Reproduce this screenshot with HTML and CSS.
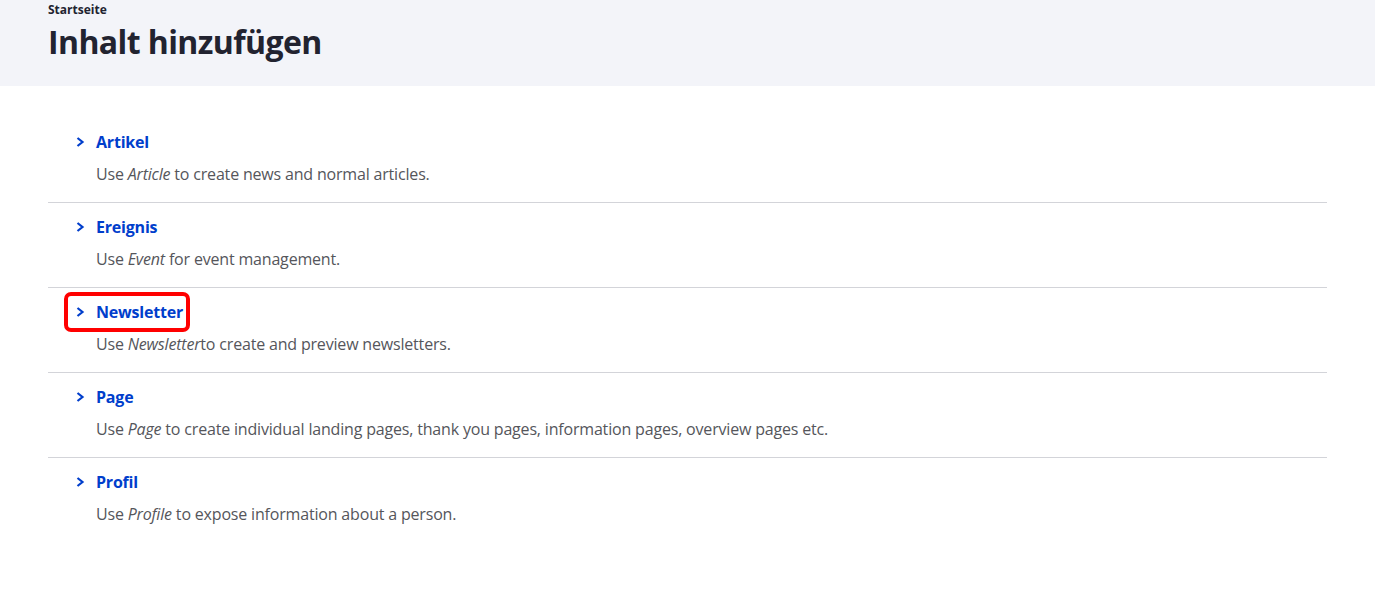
FILE: index.html
```html
<!DOCTYPE html>
<html lang="de">
<head>
<meta charset="utf-8">
<title>Inhalt hinzufügen</title>
<link rel="stylesheet" href="styles.css">
</head>
<body>
<header class="page-header">
  <nav class="breadcrumb"><a href="#">Startseite</a></nav>
  <h1 class="page-title">Inhalt hinzufügen</h1>
</header>
<main class="content">
  <ul class="type-list">
    <li class="type-item">
      <a class="type-link" href="#"><svg class="chev" viewBox="0 0 9 10" width="9" height="10"><path d="M1.5 1 L6.5 5 L1.5 9" fill="none" stroke="currentColor" stroke-width="2.2"/></svg><span>Artikel</span></a>
      <p class="type-desc">Use <em>Article</em> to create news and normal articles.</p>
    </li>
    <li class="type-item">
      <a class="type-link" href="#"><svg class="chev" viewBox="0 0 9 10" width="9" height="10"><path d="M1.5 1 L6.5 5 L1.5 9" fill="none" stroke="currentColor" stroke-width="2.2"/></svg><span>Ereignis</span></a>
      <p class="type-desc">Use <em>Event</em> for event management.</p>
    </li>
    <li class="type-item">
      <a class="type-link highlight" href="#"><svg class="chev" viewBox="0 0 9 10" width="9" height="10"><path d="M1.5 1 L6.5 5 L1.5 9" fill="none" stroke="currentColor" stroke-width="2.2"/></svg><span>Newsletter</span></a>
      <p class="type-desc">Use <em>Newsletter</em>to create and preview newsletters.</p>
    </li>
    <li class="type-item">
      <a class="type-link" href="#"><svg class="chev" viewBox="0 0 9 10" width="9" height="10"><path d="M1.5 1 L6.5 5 L1.5 9" fill="none" stroke="currentColor" stroke-width="2.2"/></svg><span>Page</span></a>
      <p class="type-desc">Use <em>Page</em> to create individual landing pages, thank you pages, information pages, overview pages etc.</p>
    </li>
    <li class="type-item">
      <a class="type-link" href="#"><svg class="chev" viewBox="0 0 9 10" width="9" height="10"><path d="M1.5 1 L6.5 5 L1.5 9" fill="none" stroke="currentColor" stroke-width="2.2"/></svg><span>Profil</span></a>
      <p class="type-desc">Use <em>Profile</em> to expose information about a person.</p>
    </li>
  </ul>
</main>
</body>
</html>
```
FILE: styles.css
```css
* { box-sizing: border-box; }
html, body { margin: 0; padding: 0; }
body {
  font-family: "Open Sans", "Noto Sans", sans-serif;
  color: #222330;
  background: #fff;
}
.page-header {
  background: #f3f4f9;
  height: 86px;
  padding: 2px 48px 0;
}
.breadcrumb {
  font-size: 12px;
  line-height: 16px;
  font-weight: 700;
}
.breadcrumb a { color: #222330; text-decoration: none; }
.page-title {
  margin: 4px 0 0;
  font-size: 32px;
  line-height: 40px;
  font-weight: 700;
  letter-spacing: -0.6px;
  color: #222330;
}
.content {
  padding: 32px 48px;
}
.type-list {
  list-style: none;
  margin: 0;
  padding: 0;
}
.type-item {
  padding: 12px 0 16px;
  border-bottom: 1px solid #d3d4d9;
}
.type-item:last-child { border-bottom: none; }
.type-link {
  display: inline-flex;
  align-items: center;
  gap: 11px;
  margin: -4px 0 -4px 20px;
  padding: 4px 3px 4px 8px;
  font-size: 16px;
  line-height: 24px;
  font-weight: 700;
  letter-spacing: -0.2px;
  color: #003ecc;
  text-decoration: none;
}
.chev { display: block; }
.highlight {
  outline: 4px solid #ff0000;
  outline-offset: 0;
  border-radius: 3px;
}
.type-desc {
  margin: 8px 0 0 48px;
  font-size: 16px;
  line-height: 24px;
  letter-spacing: -0.18px;
  color: #55565b;
}
```
